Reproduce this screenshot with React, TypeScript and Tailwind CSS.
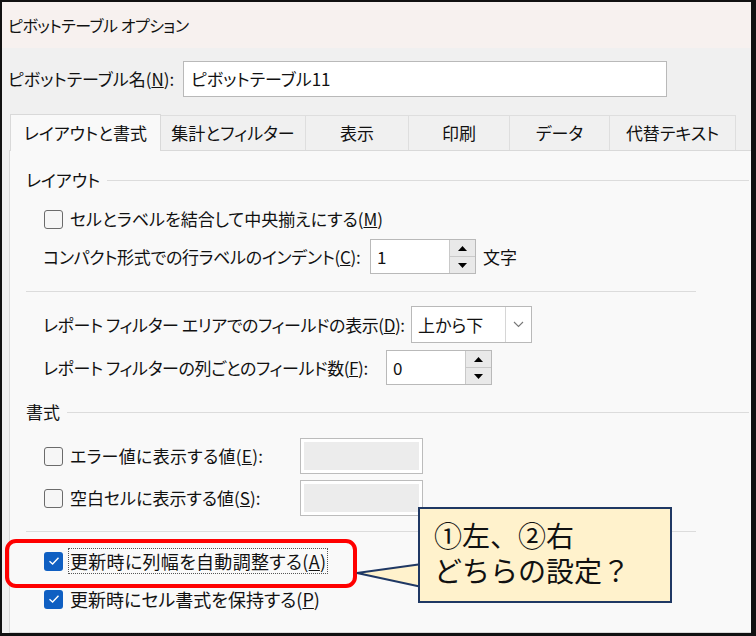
import React from "react";

const font = "font-['Noto_Sans_CJK_JP','Noto_Sans',sans-serif] [font-feature-settings:'palt']";

function CheckBox({ checked }: { checked?: boolean }) {
  if (checked) {
    return (
      <div className="w-[19px] h-[19px] rounded-[3px] bg-[#0f5fc2] flex items-center justify-center shrink-0">
        <svg width="12" height="10" viewBox="0 0 12 10">
          <path d="M1.5 5.2 L4.6 8 L10.5 1.8" fill="none" stroke="#fff" strokeWidth="1.4" />
        </svg>
      </div>
    );
  }
  return <div className="w-[19px] h-[19px] rounded-[3px] border border-[#6b6b6b] bg-[#f6f6f6] shrink-0" />;
}

function Spin({ value, width }: { value: string; width: string }) {
  return (
    <div className={`h-[35px] ${width} border border-[#b9b9b9] bg-white flex shrink-0`}>
      <div className="flex-1 flex items-center pl-[6px] text-[17px]">{value}</div>
      <div className="w-[26px] flex flex-col border-l border-[#c9c9c9]">
        <div className="flex-1 bg-[#e9e9e9] border-b border-[#c9c9c9] flex items-center justify-center">
          <svg width="9" height="5" viewBox="0 0 9 5"><path d="M0 5 L4.5 0 L9 5 Z" fill="#000" /></svg>
        </div>
        <div className="flex-1 bg-[#e9e9e9] flex items-center justify-center">
          <svg width="9" height="5" viewBox="0 0 9 5"><path d="M0 0 L4.5 5 L9 0 Z" fill="#000" /></svg>
        </div>
      </div>
    </div>
  );
}

function DisabledBox() {
  return (
    <div className="w-[123px] h-[36px] border border-[#bcbcbc] bg-white p-[3px] shrink-0">
      <div className="w-full h-full bg-[#ececec]" />
    </div>
  );
}

const tabs = [
  { label: "レイアウトと書式", w: "w-[151px]", active: true },
  { label: "集計とフィルター", w: "w-[145px]" },
  { label: "表示", w: "w-[103px]" },
  { label: "印刷", w: "w-[101px]" },
  { label: "データ", w: "w-[100px]" },
  { label: "代替テキスト", w: "w-[126px]" },
];

export default function App() {
  return (
    <div className={`relative w-[756px] h-[636px] border-l-2 border-t-2 border-b-[3px] border-r-[5px] border-[#111] flex flex-col text-[#111] whitespace-nowrap ${font}`}>
      <div className="h-[46px] bg-[#f7f1ef] flex items-center pl-[6px] text-[16px] tracking-[-0.5px] shrink-0">
        ピボットテーブル オプション
      </div>

      <div className="flex-1 bg-[#f0f0f0] flex flex-col">
        <div className="flex items-center mt-[13px] h-[36px]">
          <div className="pl-[6px] text-[17px] w-[181px]">
            ピボットテーブル名(<u>N</u>):
          </div>
          <div className="w-[484px] h-[36px] border border-[#b9b9b9] bg-white flex items-center pl-[7px] text-[17px]">
            ピボットテーブル11
          </div>
        </div>

        <div className="flex items-end pl-[8px] mt-[16px] h-[37px]">
          {tabs.map((t) =>
            t.active ? (
              <div key={t.label} className={`${t.w} h-[37px] -mb-px z-10 bg-[#f9f9f9] border border-b-0 border-[#d9d9d9] flex items-center justify-center text-[17px]`}>
                {t.label}
              </div>
            ) : (
              <div key={t.label} className={`${t.w} h-[35px] border-t border-r border-[#dedede] flex items-center justify-center text-[17px]`}>
                {t.label}
              </div>
            )
          )}
        </div>

        <div className="flex-1 ml-[7px] bg-[#f9f9f9] border border-[#d9d9d9] border-r-0 flex flex-col text-[17px]">
          <div className="flex items-center h-[24px] mt-[17px] pl-[16px] pr-[2px]">
            <span>レイアウト</span>
            <div className="flex-1 h-px bg-[#dcdcdc] ml-[7px]" />
          </div>

          <div className="flex items-center h-[30px] mt-[12px] pl-[34px] gap-[7px]">
            <CheckBox />
            <span>セルとラベルを結合して中央揃えにする(<u>M</u>)</span>
          </div>

          <div className="flex items-center h-[35px] mt-[5px] pl-[33px]">
            <span className="w-[327px] tracking-[-0.3px]">コンパクト形式での行ラベルのインデント(<u>C</u>):</span>
            <Spin value="1" width="w-[106px]" />
            <span className="ml-[7px]">文字</span>
          </div>

          <div className="h-px bg-[#dcdcdc] ml-[16px] w-[670px] mt-[17px]" />

          <div className="flex items-center h-[37px] mt-[14px] pl-[33px]">
            <span className="w-[368px] tracking-[-0.4px]">レポート フィルター エリアでのフィールドの表示(<u>D</u>):</span>
            <div className="w-[121px] h-[37px] border border-[#b9b9b9] bg-white flex shrink-0">
              <div className="flex-1 flex items-center pl-[6px]">上から下</div>
              <div className="w-[26px] border-l border-[#d6d6d6] flex items-center justify-center">
                <svg width="11" height="7" viewBox="0 0 11 7">
                  <path d="M1 1 L5.5 5.5 L10 1" fill="none" stroke="#777" strokeWidth="1.1" />
                </svg>
              </div>
            </div>
          </div>

          <div className="flex items-center h-[35px] mt-[7px] pl-[33px]">
            <span className="w-[343px] tracking-[-0.4px]">レポート フィルターの列ごとのフィールド数(<u>F</u>):</span>
            <Spin value="0" width="w-[106px]" />
          </div>

          <div className="flex items-center h-[24px] mt-[15px] pl-[16px] pr-[2px]">
            <span>書式</span>
            <div className="flex-1 h-px bg-[#dcdcdc] ml-[7px]" />
          </div>

          <div className="flex items-center h-[36px] mt-[14px] pl-[34px]">
            <CheckBox />
            <span className="ml-[7px] w-[230px] tracking-[0.3px]">エラー値に表示する値(<u>E</u>):</span>
            <DisabledBox />
          </div>

          <div className="flex items-center h-[36px] mt-[6px] pl-[34px]">
            <CheckBox />
            <span className="ml-[7px] w-[230px]">空白セルに表示する値(<u>S</u>):</span>
            <DisabledBox />
          </div>

          <div className="h-px bg-[#dcdcdc] ml-[16px] w-[670px] mt-[15px]" />

          <div className="flex items-center h-[30px] mt-[14px] pl-[34px]">
            <CheckBox checked />
            <span className="ml-[5px] px-[1px] h-[26px] flex items-center border border-dotted border-[#555] text-[18px] tracking-[0.3px]">
              更新時に列幅を自動調整する(<u>A</u>)
            </span>
          </div>

          <div className="flex items-center h-[30px] mt-[8px] pl-[34px]">
            <CheckBox checked />
            <span className="ml-[7px] text-[18px]">更新時にセル書式を保持する(<u>P</u>)</span>
          </div>
        </div>
      </div>

      <div className="absolute left-[3px] top-[537px] w-[352px] h-[49px] border-[4px] border-[#ff0000] rounded-[11px]" />

      <svg className="absolute left-[353px] top-[558px]" width="70" height="32" viewBox="0 0 70 32">
        <path d="M67 4 L2 13 L67 27" fill="#fff2cc" stroke="#1f3864" strokeWidth="2" />
      </svg>

      <div className="absolute left-[416px] top-[505px] w-[254px] h-[96px] bg-[#fff2cc] border-2 border-[#1f3864] pl-[14px] pt-[9px] text-[28px] leading-[35px] [font-feature-settings:normal]">
        <div>①左、②右</div>
        <div>どちらの設定？</div>
      </div>
    </div>
  );
}
